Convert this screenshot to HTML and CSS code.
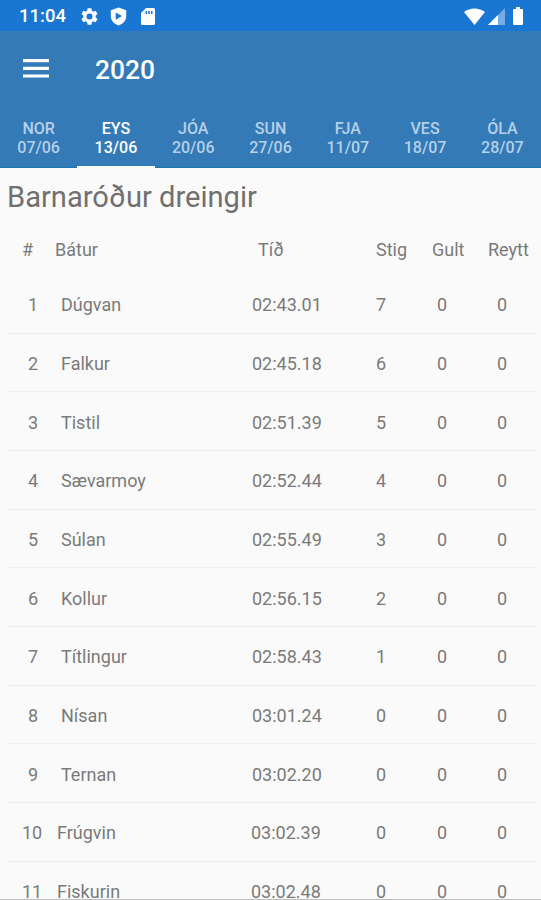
FILE: index.html
```
<!DOCTYPE html>
<html lang="fo">
<head>
  <meta charset="UTF-8" />
  <meta name="viewport" content="width=device-width, initial-scale=1" />
  <title>2020</title>
  <link rel="stylesheet" href="styles.css">
</head>
<body>
  <div class="statusbar">
    <span class="clock">11:04</span>
    <svg class="gear" viewBox="2 2 20 20" width="17" height="17"><path fill="#fff" d="M19.14 12.94c.04-.3.06-.61.06-.94s-.02-.64-.07-.94l2.03-1.58a.49.49 0 0 0 .12-.61l-1.92-3.32a.49.49 0 0 0-.59-.22l-2.39.96c-.5-.38-1.03-.7-1.62-.94l-.36-2.54a.48.48 0 0 0-.48-.41h-3.84a.47.47 0 0 0-.47.41l-.36 2.54c-.59.24-1.13.57-1.62.94l-2.39-.96a.48.48 0 0 0-.59.22L2.74 8.87a.47.47 0 0 0 .12.61l2.03 1.58c-.05.3-.09.63-.09.94s.02.64.07.94l-2.03 1.58a.49.49 0 0 0-.12.61l1.92 3.32c.12.22.37.29.59.22l2.39-.96c.5.38 1.03.7 1.62.94l.36 2.54c.05.24.24.41.48.41h3.84c.24 0 .44-.17.47-.41l.36-2.54c.59-.24 1.13-.56 1.62-.94l2.39.96c.22.08.47 0 .59-.22l1.92-3.32a.47.47 0 0 0-.12-.61l-2.01-1.58zM12 15.6a3.6 3.6 0 1 1 0-7.2 3.6 3.6 0 0 1 0 7.2z"/></svg>
    <svg class="shield" viewBox="0 0 17 19" width="17" height="19"><path fill="#fff" d="M8.5.5 16.2 3.3V9c0 4.500-3.200 8-7.700 9.500C4 17 .8 13.500.8 9V3.300z"/><path fill="#1976d2" d="M5.700 5.500v7.200L12 9.100z"/></svg>
    <svg class="sdcard" viewBox="0 0 14 17" width="14" height="17"><path fill="#fff" d="M5 0h7.500Q14 0 14 1.500v14q0 1.500-1.500 1.500h-11Q0 17 0 15.500V5z"/><path fill="#1976d2" d="M4.600 3h1.500v3H4.600zm2.700 0h1.500v3H7.300zM10 3h1.500v3H10z"/></svg>
    <div class="signals">
      <svg viewBox="0 0 21 17" width="21" height="17"><path fill="#fff" d="M10.500 17 0 4C6-.8 15-.8 21 4z"/></svg>
      <svg viewBox="0 0 17 17" width="17" height="17"><path fill="#fff" opacity=".4" d="M0 17 17 0v17z"/><path fill="#fff" d="M0 17 10 7v10z"/></svg>
      <svg class="battery" viewBox="0 0 10 18" width="10" height="18"><path fill="#fff" d="M3 0h4v2h2q1 0 1 1v14q0 1-1 1H1q-1 0-1-1V3q0-1 1-1h2z"/></svg>
    </div>
  </div>

  <header class="toolbar">
    <svg viewBox="0 0 26 19" width="26" height="19"><path fill="#fff" d="M0 0h26v3.200H0zM0 7.700h26v3.200H0zM0 15.400h26v3.200H0z"/></svg>
    <h1>2020</h1>
  </header>

  <nav class="tabs">
    <div class="tab">NOR<br>07/06</div>
    <div class="tab active">EYS<br>13/06</div>
    <div class="tab">JÓA<br>20/06</div>
    <div class="tab">SUN<br>27/06</div>
    <div class="tab">FJA<br>11/07</div>
    <div class="tab">VES<br>18/07</div>
    <div class="tab">ÓLA<br>28/07</div>
  </nav>

  <main class="results">
    <h2>Barnaróður dreingir</h2>
    <div class="row head"><span>#</span><span>Bátur</span><span>Tíð</span><span>Stig</span><span>Gult</span><span>Reytt</span></div>
    <div class="row"><span>1</span><span>Dúgvan</span><span>02:43.01</span><span>7</span><span>0</span><span>0</span></div>
    <div class="row"><span>2</span><span>Falkur</span><span>02:45.18</span><span>6</span><span>0</span><span>0</span></div>
    <div class="row"><span>3</span><span>Tistil</span><span>02:51.39</span><span>5</span><span>0</span><span>0</span></div>
    <div class="row"><span>4</span><span>Sævarmoy</span><span>02:52.44</span><span>4</span><span>0</span><span>0</span></div>
    <div class="row"><span>5</span><span>Súlan</span><span>02:55.49</span><span>3</span><span>0</span><span>0</span></div>
    <div class="row"><span>6</span><span>Kollur</span><span>02:56.15</span><span>2</span><span>0</span><span>0</span></div>
    <div class="row"><span>7</span><span>Títlingur</span><span>02:58.43</span><span>1</span><span>0</span><span>0</span></div>
    <div class="row"><span>8</span><span>Nísan</span><span>03:01.24</span><span>0</span><span>0</span><span>0</span></div>
    <div class="row"><span>9</span><span>Ternan</span><span>03:02.20</span><span>0</span><span>0</span><span>0</span></div>
    <div class="row wide"><span>10</span><span>Frúgvin</span><span>03:02.39</span><span>0</span><span>0</span><span>0</span></div>
    <div class="row wide"><span>11</span><span>Fiskurin</span><span>03:02.48</span><span>0</span><span>0</span><span>0</span></div>
  </main>
</body>
</html>
```
FILE: styles.css
```
* {
  box-sizing: border-box;
}

body {
  margin: 0;
  height: 900px;
  overflow: hidden;
  display: flex;
  flex-direction: column;
  font-family: Roboto, "Liberation Sans", sans-serif;
  background: #fafafa;
  color: #7a7a7a;
}

svg {
  display: block;
  flex: none;
}

.statusbar {
  flex: none;
  height: 31px;
  padding: 1px 18px 0 19px;
  display: flex;
  align-items: center;
  background: #1976d2;
  color: #fff;
}

.clock {
  width: 61.5px;
  font-size: 18.5px;
  font-weight: 500;
}

.shield {
  margin-left: 12px;
}

.sdcard {
  margin-left: 14px;
}

.signals {
  display: flex;
  align-items: center;
  margin-left: auto;
  gap: 3px;
}

.battery {
  margin-left: 5px;
}

.toolbar {
  flex: none;
  height: 77px;
  padding: 0 23px;
  display: flex;
  align-items: center;
  gap: 46px;
  background: #337ab7;
  color: #fff;
}

.toolbar svg {
  margin-top: -2px;
}

.toolbar h1 {
  margin: 0;
  font-size: 26.4px;
  font-weight: 500;
}

.tabs {
  flex: none;
  height: 60px;
  display: grid;
  grid-template-columns: repeat(7, 1fr);
  background: #337ab7;
  border-bottom: 1px solid #1976b2;
}

.tab {
  padding-top: 11px;
  font-size: 16px;
  line-height: 19px;
  font-weight: 500;
  text-align: center;
  color: #b5d0e8;
}

.tab.active {
  color: #fff;
  margin-bottom: -1px;
  border-bottom: 2px solid #fafafa;
}

.results {
  flex: 1;
  min-height: 0;
  overflow: hidden;
  padding: 0 5px 0 8px;
  border-bottom: 1px solid #bdbdbd;
}

h2 {
  margin: 0 0 0 -1px;
  height: 56px;
  line-height: 58px;
  font-size: 29.1px;
  font-weight: 400;
  color: #707070;
}

.row {
  display: grid;
  grid-template-columns: 33px 191px 124px 61px 60px 1fr;
  align-items: center;
  height: 58.67px;
  padding: 2px 0 0 20px;
  border-bottom: 1px solid #eeeeee;
  font-size: 18px;
  white-space: nowrap;
}

.row.head {
  grid-template-columns: 33px 203px 118px 56px 56px 1fr;
  height: 51px;
  padding: 0 0 0 14px;
  border-bottom: none;
}

.row.wide {
  grid-template-columns: 35px 194px 125px 61px 60px 1fr;
  padding-left: 14px;
}
```
